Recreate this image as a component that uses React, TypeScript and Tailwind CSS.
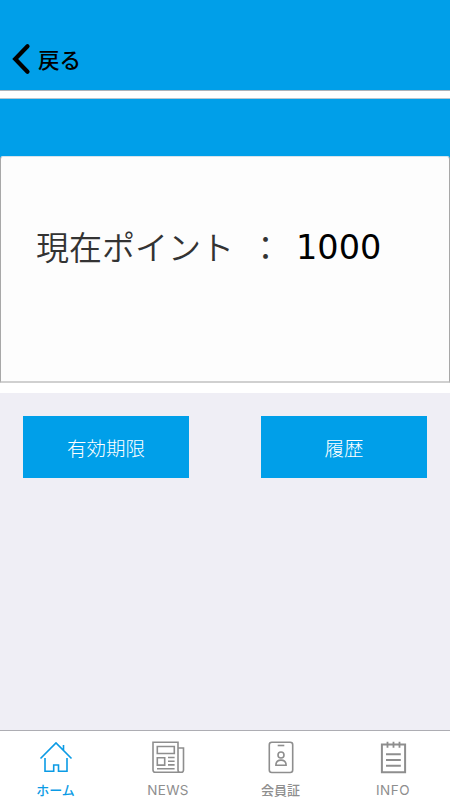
import type { ReactNode } from "react";

const tabs: { label: string; active?: boolean; labelClass: string; icon: ReactNode }[] = [
  {
    label: "ホーム",
    active: true,
    labelClass: "text-[13px] font-medium",
    icon: (
      <>
        <path d="M1.5 18.5 17 3l15.5 15.5M24.5 5v5" />
        <path d="M6 18v13.3h8.7V25h4.8v6.3H28V18" />
      </>
    ),
  },
  {
    label: "NEWS",
    labelClass: "font-['Inter',sans-serif] text-[13.5px] tracking-[0.3px]",
    icon: (
      <>
        <path d="M27 30V2.3H2V30q0 2.3 2.3 2.3h25.9q2.3 0 2.3-2.3V8H27v22q0 2.3 2.3 2.3" />
        <path d="M6.3 6.5h17v7h-17zM6.3 17.7h7.4v7.4H6.3z" />
        <path d="M17 17.5h6.6M17 21.2h6.6M17 24.9h6.6M6 28.7h17.6" />
      </>
    ),
  },
  {
    label: "会員証",
    labelClass: "text-[13px] font-medium",
    icon: (
      <>
        <rect x="5.3" y="2.3" width="23.4" height="30.2" rx="2.5" />
        <path d="M13.7 5.5h6.6" />
        <circle cx="17" cy="15" r="3" />
        <path d="M11.9 25.3q0-5.2 5.1-5.2t5.1 5.2z" />
      </>
    ),
  },
  {
    label: "INFO",
    labelClass: "font-['Inter',sans-serif] text-[13.5px] tracking-[0.5px]",
    icon: (
      <>
        <path strokeWidth="2" d="M5.9 4.5h23.2v27.8H5.9z" />
        <path strokeWidth="1.8" d="M11.5 1.7v6M17.5 1.7v6M23.5 1.7v6" />
        <path strokeWidth="2" d="M10 14.2h14.8M10 20h14.8M10 25.8h14.8" />
      </>
    ),
  },
];

export default function App() {
  return (
    <div className="flex h-[800px] w-[450px] flex-col overflow-hidden bg-[#efeef5] font-['Noto_Sans_CJK_JP',sans-serif]">
      {/* Header */}
      <header className="flex h-[90px] shrink-0 items-end bg-[#009fe9] pb-[15px] pl-3">
        <button className="flex items-center text-black">
          <svg width="19" height="32" viewBox="0 0 19 32" fill="none" stroke="currentColor" strokeWidth="4.2" strokeLinecap="round">
            <path d="M15.5 3.3 3.2 16 15.5 28.7" />
          </svg>
          <span className="-mt-px ml-[7px] text-[21.5px] leading-8 font-medium">戻る</span>
        </button>
      </header>
      <div className="h-[9px] shrink-0 border-y border-t-[#adb3b9] border-b-[#b5c5d0] bg-white" />
      <div className="h-[57px] shrink-0 bg-[#009fe9]" />

      {/* Points */}
      <section className="h-[237px] shrink-0 bg-linear-to-t from-white from-50% to-[#009fe9] to-50%">
        <div className="flex h-[227px] items-start rounded-t-[3px] border border-b-2 border-x-[#a8a8a8] border-t-[#d5e3ec] border-b-[#d0d0d0] bg-[#fdfdfd] pt-[65px] pl-[35px]">
          <span className="text-[33px] leading-[48px] font-[350] text-[#333]">現在ポイント</span>
          <span className="ml-[15px] w-[33px] text-center text-[33px] leading-[48px] font-[350] text-[#333]">：</span>
          <span className="mt-[2px] ml-[14px] font-['DejaVu_Sans',sans-serif] text-[33.5px] leading-[48px] text-black">1000</span>
        </div>
      </section>

      {/* Actions */}
      <div className="flex flex-1 items-start justify-between px-[23px] pt-[23px]">
        <button className="h-[62px] w-[166px] bg-[#009fe9] pt-px text-[19.5px] font-light text-white">有効期限</button>
        <button className="h-[62px] w-[166px] bg-[#009fe9] pt-px text-[19.5px] font-light text-white">履歴</button>
      </div>

      {/* Tab bar */}
      <nav className="grid h-[70px] shrink-0 grid-cols-4 border-t border-[#adadb3] bg-white">
        {tabs.map((tab) => (
          <a
            key={tab.label}
            className={`flex flex-col items-center pt-[9px] pr-[1.5px] ${tab.active ? "text-[#0b9be5]" : "text-[#8e8e8e]"}`}
          >
            <svg width="34" height="34" viewBox="0 0 34 34" fill="none" stroke="currentColor" strokeWidth="1.6">
              {tab.icon}
            </svg>
            <span className={`mt-[6px] leading-5 ${tab.labelClass}`}>{tab.label}</span>
          </a>
        ))}
      </nav>
    </div>
  );
}
